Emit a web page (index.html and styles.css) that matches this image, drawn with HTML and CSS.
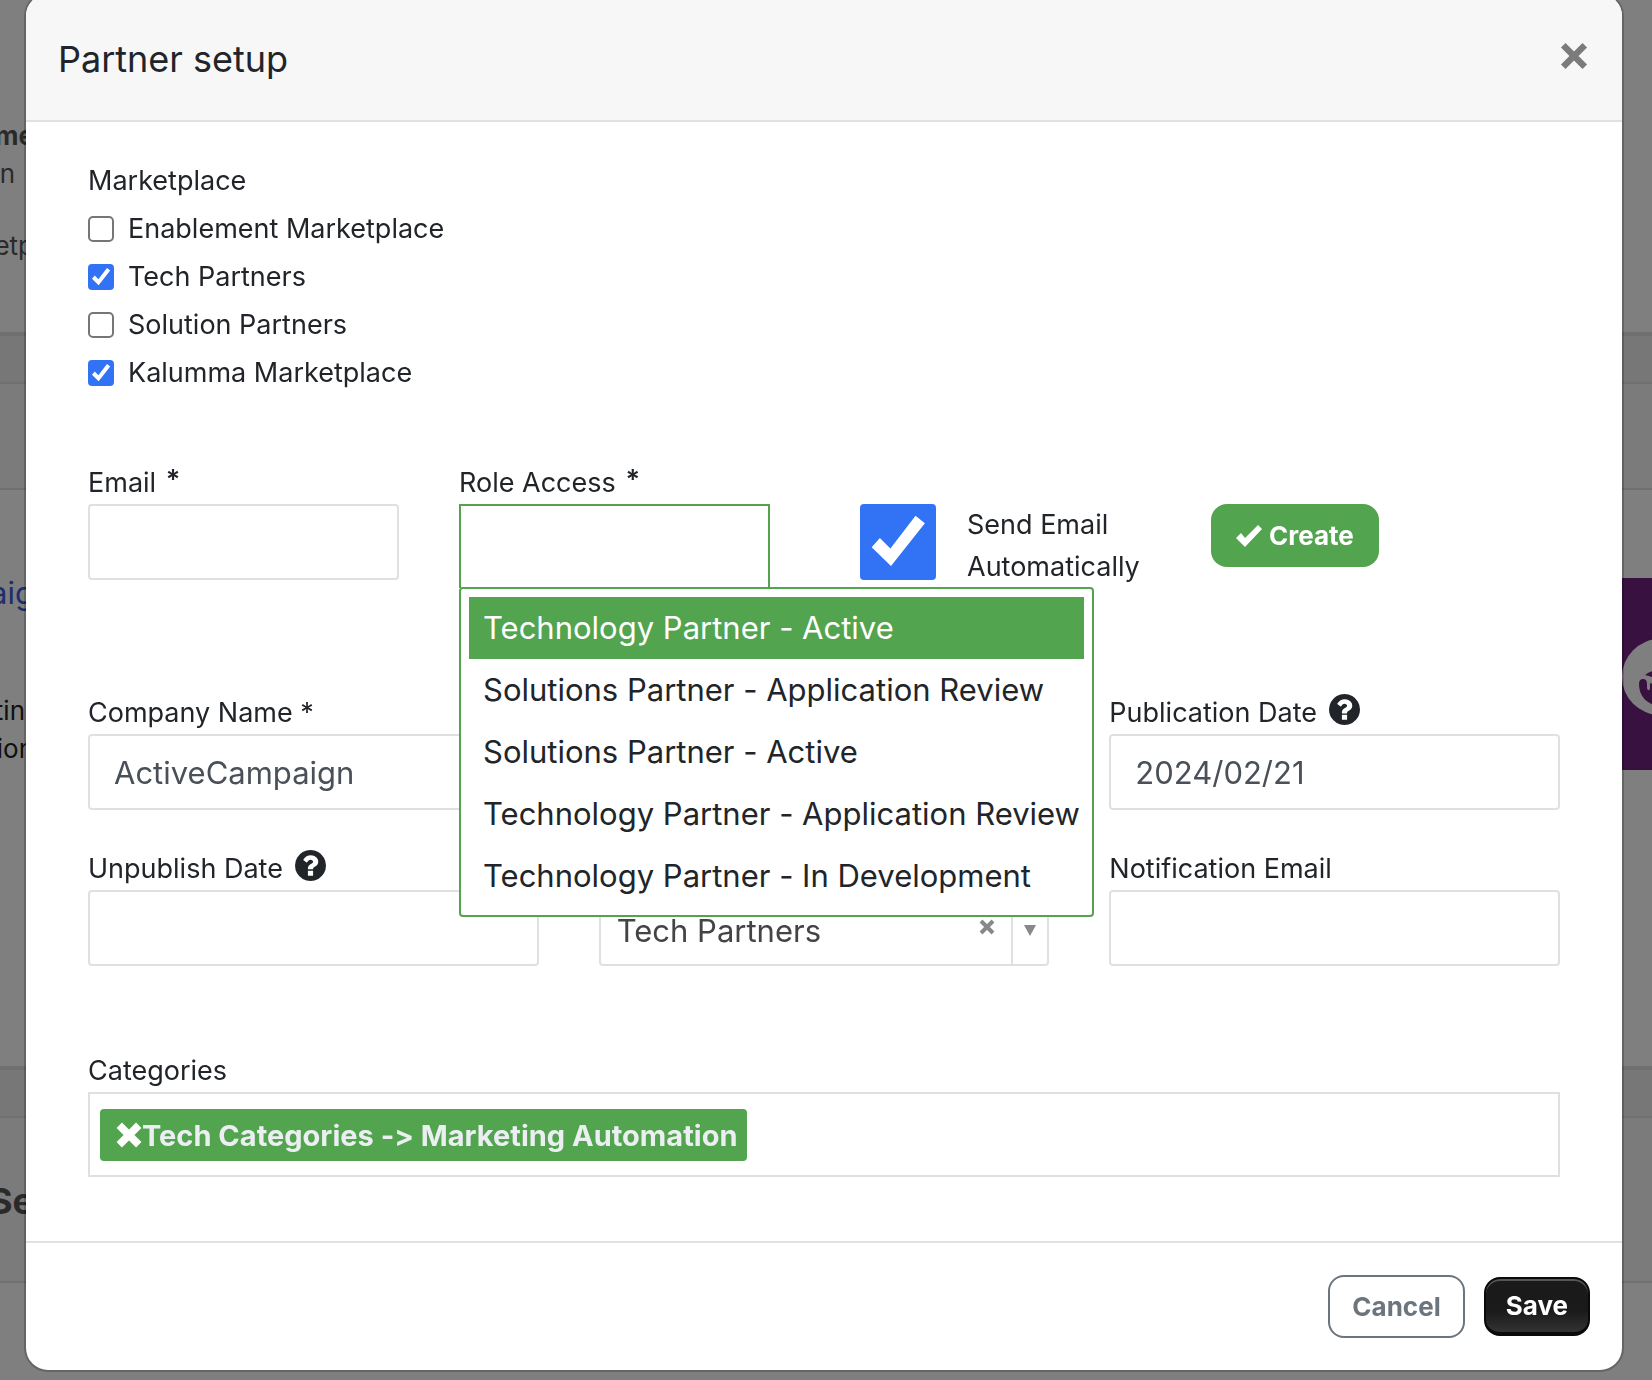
FILE: index.html
```html
<!DOCTYPE html>
<html lang="en">
<head>
    <meta charset="UTF-8">
    <meta name="viewport" content="width=device-width, initial-scale=1.0">
    <title>Partner setup</title>
    <link rel="stylesheet" href="styles.css">
</head>
<body>
    <!-- page behind the modal -->
    <div class="page" aria-hidden="true">
        <div class="page-section intro">
            <p><b>me</b></p>
            <p class="short">n</p>
            <p class="spaced">etp</p>
        </div>
        <div class="page-gap"></div>
        <div class="page-head"></div>
        <div class="page-section listing">
            <p class="name">aig</p>
            <p class="text">tin</p>
            <p>ion</p>
            <div class="promo">
                <svg class="promo-logo" viewBox="0 0 76 76">
                    <circle cx="38" cy="38" r="38" fill="#fff"/>
                    <path d="M23 36q6-5 15-5v11l-8-4zM17 45q0-5 4-5t4 5v4q1 4 3 1v-6l10 4v20q-21-5-21-23z" fill="#702280"/>
                </svg>
            </div>
        </div>
        <div class="page-gap"></div>
        <div class="page-head tall"><p>Se</p></div>
    </div>
    <div class="backdrop"></div>

    <div class="modal" role="dialog" aria-labelledby="modalTitle">
        <div class="modal-header">
            <h1 id="modalTitle">Partner setup</h1>
            <button type="button" class="close" aria-label="Close">
                <svg viewBox="0 0 26 26"><path d="M3 3l20 20M23 3L3 23" stroke="currentColor" stroke-width="6"/></svg>
            </button>
        </div>

        <form class="modal-body">
            <fieldset class="marketplaces">
                <legend>Marketplace</legend>
                <label class="check"><input type="checkbox">Enablement Marketplace</label>
                <label class="check"><input type="checkbox" checked>Tech Partners</label>
                <label class="check"><input type="checkbox">Solution Partners</label>
                <label class="check"><input type="checkbox" checked>Kalumma Marketplace</label>
            </fieldset>

            <div class="user-row">
                <div class="field">
                    <label for="email">Email <span class="required">*</span></label>
                    <input type="text" id="email">
                </div>
                <div class="field role-field">
                    <label for="role">Role Access <span class="required">*</span></label>
                    <input type="text" id="role" class="open" role="combobox" aria-expanded="true" aria-controls="roleList">
                    <ul class="dropdown" id="roleList" role="listbox">
                        <li role="option" class="active" aria-selected="true">Technology Partner - Active</li>
                        <li role="option">Solutions Partner - Application Review</li>
                        <li role="option">Solutions Partner - Active</li>
                        <li role="option">Technology Partner - Application Review</li>
                        <li role="option">Technology Partner - In Development</li>
                    </ul>
                </div>
                <div class="send-email">
                    <input type="checkbox" id="sendEmail" checked>
                    <label for="sendEmail">Send Email Automatically</label>
                </div>
                <div class="create">
                    <button type="button" class="btn btn-success">
                        <svg viewBox="0 0 26 24"><path d="M0 14l5-5 4 5L22 1l4 4L9 23z" fill="currentColor"/></svg>
                        Create
                    </button>
                </div>
            </div>

            <div class="details">
                <div class="field">
                    <label for="company">Company Name *</label>
                    <input type="text" id="company" value="ActiveCampaign">
                </div>
                <div class="field"></div>
                <div class="field">
                    <label for="published">Publication Date
                        <svg class="help" viewBox="128 128 1536 1536"><path d="M1024 1376v-192q0-14-9-23t-23-9h-192q-14 0-23 9t-9 23v192q0 14 9 23t23 9h192q14 0 23-9t9-23zm256-672q0-88-55.5-163t-138.5-116-170-41q-243 0-371 213-15 24 8 42l132 100q7 6 19 6 16 0 25-12 53-68 86-92 34-24 86-24 48 0 85.5 26t37.5 59q0 38-20 61t-68 45q-63 28-115.5 86.5t-52.5 125.5v36q0 14 9 23t23 9h192q14 0 23-9t9-23q0-19 21.5-49.5t54.5-49.5q32-18 49-28.5t46-35 44.5-48 28-60.5 12.5-81zm384 192q0 209-103 385.5t-279.5 279.5-385.5 103-385.5-103-279.5-279.5-103-385.5 103-385.5 279.5-279.5 385.5-103 385.5 103 279.5 279.5 103 385.5z"/></svg>
                    </label>
                    <input type="text" id="published" value="2024/02/21">
                </div>
                <div class="field">
                    <label for="unpublish">Unpublish Date
                        <svg class="help" viewBox="128 128 1536 1536"><path d="M1024 1376v-192q0-14-9-23t-23-9h-192q-14 0-23 9t-9 23v192q0 14 9 23t23 9h192q14 0 23-9t9-23zm256-672q0-88-55.5-163t-138.5-116-170-41q-243 0-371 213-15 24 8 42l132 100q7 6 19 6 16 0 25-12 53-68 86-92 34-24 86-24 48 0 85.5 26t37.5 59q0 38-20 61t-68 45q-63 28-115.5 86.5t-52.5 125.5v36q0 14 9 23t23 9h192q14 0 23-9t9-23q0-19 21.5-49.5t54.5-49.5q32-18 49-28.5t46-35 44.5-48 28-60.5 12.5-81zm384 192q0 209-103 385.5t-279.5 279.5-385.5 103-385.5-103-279.5-279.5-103-385.5 103-385.5 279.5-279.5 385.5-103 385.5 103 279.5 279.5 103 385.5z"/></svg>
                    </label>
                    <input type="text" id="unpublish">
                </div>
                <div class="field field-bottom">
                    <div class="select">
                        <select aria-label="Marketplace"><option>Tech Partners</option></select>
                        <button type="button" class="clear" aria-label="Clear">
                            <svg viewBox="0 0 16 16"><path d="M2 2l12 12M14 2L2 14" stroke="currentColor" stroke-width="4"/></svg>
                        </button>
                        <span class="arrow"></span>
                    </div>
                </div>
                <div class="field">
                    <label for="notification">Notification Email</label>
                    <input type="text" id="notification">
                </div>
            </div>

            <div class="categories">
                <div class="categories-label" id="catLabel">Categories</div>
                <div class="tags" role="group" aria-labelledby="catLabel">
                    <span class="tag">
                        <button type="button" aria-label="Remove">
                            <svg viewBox="0 0 24 24"><path d="M3 3l18 18M21 3L3 21" stroke="currentColor" stroke-width="7"/></svg>
                        </button>Tech Categories -&gt; Marketing Automation
                    </span>
                </div>
            </div>
        </form>

        <div class="modal-footer">
            <button type="button" class="btn btn-outline">Cancel</button>
            <button type="button" class="btn btn-dark">Save</button>
        </div>
    </div>
</body>
</html>
```
FILE: styles.css
```css
* {
    box-sizing: border-box;
}
body {
    margin: 0;
    min-height: 100vh;
    overflow: hidden;
    font-family: Inter, "Liberation Sans", sans-serif;
    font-size: 27px;
    font-feature-settings: "calt" 0;
    color: #212529;
    background-color: #fff;
}
button, input, select {
    font-family: inherit;
}

/* page behind the modal */
.page {
    position: absolute;
    inset: 0;
    overflow: hidden;
    font-size: 26px;
    line-height: 38px;
    color: #555;
}
.page p {
    display: flex;
    justify-content: flex-end;
    width: 34px;
    margin: 0;
}
.page p.short {
    width: 15px;
}
.page p.text {
    width: 25px;
}
.page-section.intro {
    height: 332px;
    padding-top: 117px;
}
.intro .spaced {
    margin-top: 34px;
}
.page-gap {
    height: 52px;
    background-color: #eee;
    border-top: 4px solid #e0e0e0;
    border-bottom: 2px solid #e0e0e0;
}
.page-head {
    height: 106px;
    background-color: #f7f7f7;
    border-bottom: 2px solid #e0e0e0;
}
.page-head.tall {
    height: 165px;
    padding-top: 64px;
    font-size: 36px;
    font-weight: 700;
}
.page-section.listing {
    position: relative;
    height: 576px;
    padding-top: 84px;
    color: #222;
}
.page .name {
    margin-bottom: 80px;
    font-size: 31px;
    color: #3b5fd9;
}
.promo {
    position: absolute;
    top: 88px;
    right: 0;
    width: 30px;
    height: 192px;
    padding-top: 61px;
    overflow: hidden;
    background-color: #702280;
}
.promo-logo {
    display: block;
    width: 76px;
    height: 76px;
}
.backdrop {
    position: fixed;
    inset: 0;
    background-color: rgba(0, 0, 0, 0.5);
}

.modal {
    position: relative;
    margin: -8px 28px 8px 24px;
    border: 2px solid rgba(0, 0, 0, 0.2);
    border-radius: 24px;
    background-color: #fff;
    background-clip: padding-box;
}
.modal-header {
    display: flex;
    justify-content: space-between;
    align-items: center;
    height: 128px;
    padding: 4px 34px 0 32px;
    border-bottom: 2px solid #dee2e6;
    border-radius: 22px 22px 0 0;
    background-color: #f7f7f7;
}
.modal-header h1 {
    margin: 0;
    font-size: 36px;
    font-weight: 400;
    line-height: 60px;
}
.close {
    margin-bottom: 6px;
    padding: 0;
    border: none;
    background: none;
    color: #7b7b7b;
    line-height: 0;
    cursor: pointer;
}
.close svg {
    width: 28px;
    height: 28px;
}
.modal-body {
    padding: 35px 62px 64px;
}

.marketplaces {
    margin: 0 0 63px;
    padding: 0;
    border: none;
    line-height: 48px;
}
.marketplaces legend {
    padding: 0;
}
.check {
    display: flex;
    align-items: center;
    gap: 14px;
}
input[type="checkbox"] {
    appearance: none;
    flex: none;
    width: 26px;
    height: 26px;
    margin: 0;
    border: 2px solid #767676;
    border-radius: 5px;
    background-color: #fff;
}
input[type="checkbox"]:checked {
    border: none;
    border-radius: 4px;
    background: #3273f6 url("data:image/svg+xml,%3Csvg xmlns='http://www.w3.org/2000/svg' viewBox='0 0 26 26'%3E%3Cpath d='M4 14.8l2.8-3.2 3.6 3.6L19 4l3.2 2.6-11.6 14.6z' fill='%23fff'/%3E%3C/svg%3E") center / 100% no-repeat;
}

.user-row {
    display: grid;
    grid-template-columns: 311fr 311fr 321fr 349fr;
    gap: 60px;
    margin-bottom: 102px;
}
.field > label,
.categories-label {
    display: block;
    height: 44px;
    line-height: 46px;
}
.required {
    margin-left: 2px;
    font-weight: 600;
    line-height: 1;
    vertical-align: 3px;
}
.field input {
    display: block;
    width: 100%;
    height: 76px;
    padding: 0 24px;
    border: 2px solid #e0e0e0;
    border-radius: 4px;
    outline: none;
    background-color: #fff;
    font-size: 31px;
    color: #495057;
}
.role-field {
    position: relative;
}
.field input.open {
    height: 84px;
    border-color: #52a44e;
    border-bottom: none;
    border-radius: 0;
}
.dropdown {
    position: absolute;
    z-index: 10;
    top: 127px;
    left: 0;
    margin: 0;
    padding: 8px;
    border: 2px solid #52a44e;
    border-radius: 4px;
    background-color: #fff;
    list-style: none;
    font-size: 31px;
    line-height: 62px;
    white-space: nowrap;
}
.dropdown li {
    padding: 0 4px 0 14px;
}
.dropdown .active {
    background-color: #52a44e;
    color: #fff;
}
.send-email {
    display: flex;
    align-items: flex-start;
    gap: 31px;
    padding: 44px 0 0 30px;
    line-height: 42px;
}
.send-email input[type="checkbox"] {
    width: 76px;
    height: 76px;
}
.create {
    padding-top: 44px;
}

.details {
    display: grid;
    grid-template-columns: repeat(3, 1fr);
    gap: 36px 60px;
    margin-bottom: 82px;
}
.help {
    width: 31px;
    height: 31px;
    margin-left: 4px;
    fill: #212529;
    vertical-align: -3px;
}
.field-bottom {
    display: flex;
    align-items: flex-end;
}
.select {
    position: relative;
    width: 100%;
}
.select select {
    appearance: none;
    display: block;
    width: 100%;
    height: 76px;
    padding: 4px 80px 0 16px;
    border: 2px solid #e0e0e0;
    border-radius: 4px;
    background-color: #fff;
    font-size: 31px;
    color: #444;
}
.clear {
    position: absolute;
    top: 29px;
    right: 54px;
    padding: 0;
    border: none;
    background: none;
    color: #888;
    line-height: 0;
}
.clear svg {
    width: 16px;
    height: 16px;
}
.arrow {
    position: absolute;
    top: 2px;
    right: 2px;
    bottom: 2px;
    width: 36px;
    border-left: 2px solid #e0e0e0;
    pointer-events: none;
}
.arrow::after {
    content: "";
    display: block;
    width: 0;
    margin: 33px auto 0 11px;
    border: 6px solid transparent;
    border-top: 11px solid #888;
    border-bottom: none;
}

.tags {
    display: flex;
    height: 85px;
    padding: 15px 10px;
    border: 2px solid #e0e0e0;
}
.tag {
    display: flex;
    align-items: center;
    height: 52px;
    padding: 0 10px 0 16px;
    border-radius: 4px;
    background-color: #52a44e;
    color: #eceff2;
    font-size: 29px;
    font-weight: 700;
    white-space: nowrap;
}
.tag button {
    padding: 0;
    border: none;
    background: none;
    color: #fff;
    line-height: 0;
}
.tag svg {
    width: 26px;
    height: 26px;
}

.modal-footer {
    display: flex;
    justify-content: flex-end;
    align-items: center;
    gap: 19px;
    height: 129px;
    padding: 0 32px;
    border-top: 2px solid #dee2e6;
}
.btn {
    height: 63px;
    padding: 0 25px;
    border: none;
    border-radius: 16px;
    font-size: 26px;
    font-weight: 700;
    cursor: pointer;
}
.btn-success {
    display: flex;
    align-items: center;
    gap: 7px;
    background-color: #52a44e;
    color: #fff;
}
.btn-success svg {
    width: 26px;
    height: 24px;
}
.btn-outline {
    padding: 0 22px;
    border: 2px solid #6c757d;
    background-color: #fff;
    color: #6c757d;
}
.btn-dark {
    height: 59px;
    padding: 0 20px;
    border: 2px solid #0a0a0a;
    border-bottom-width: 4px;
    background: linear-gradient(#1a1a1a 60%, #333);
    box-shadow: inset 0 2px 0 #555;
    color: #fff;
}
```
